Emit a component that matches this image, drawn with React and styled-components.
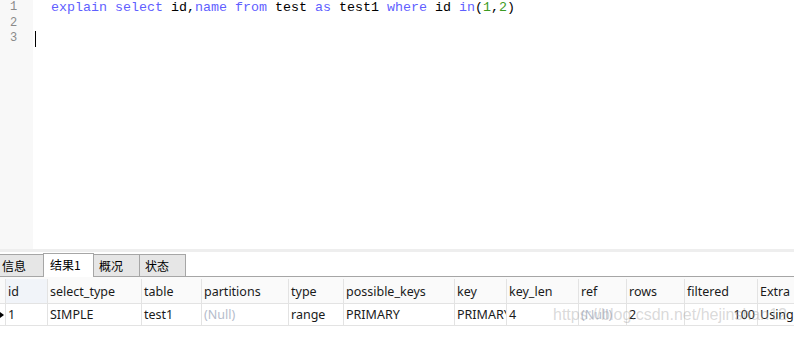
import styled, { createGlobalStyle } from "styled-components";

const GlobalStyle = createGlobalStyle`
  html, body {
    margin: 0;
    padding: 0;
    background: #ffffff;
  }
  body {
    font-family: "Noto Sans", "Noto Sans CJK SC", sans-serif;
  }
`;

// column widths taken from the grid of the result view
const COLUMNS = [
  { key: "id", label: "id", width: 42 },
  { key: "select_type", label: "select_type", width: 94 },
  { key: "table", label: "table", width: 60 },
  { key: "partitions", label: "partitions", width: 87 },
  { key: "type", label: "type", width: 55 },
  { key: "possible_keys", label: "possible_keys", width: 111 },
  { key: "key", label: "key", width: 52 },
  { key: "key_len", label: "key_len", width: 72 },
  { key: "ref", label: "ref", width: 48 },
  { key: "rows", label: "rows", width: 58 },
  { key: "filtered", label: "filtered", width: 73, align: "right" },
  { key: "Extra", label: "Extra", width: 60 },
];

const ROW = {
  id: "1",
  select_type: "SIMPLE",
  table: "test1",
  partitions: null,
  type: "range",
  possible_keys: "PRIMARY",
  key: "PRIMARY",
  key_len: "4",
  ref: null,
  rows: "2",
  filtered: "100",
  Extra: "Using where",
};

const TABS = ["信息", "结果1", "概况", "状态"];

const App = () => {
  return (
    <>
      <GlobalStyle />
      <Page>
        {/* SQL editor */}
        <Editor>
          <Gutter>
            <LineNo>1</LineNo>
            <LineNo>2</LineNo>
            <LineNo>3</LineNo>
          </Gutter>
          <Code>
            <Line>
              <Kw>explain</Kw> <Kw>select</Kw> id,<Kw>name</Kw> <Kw>from</Kw> test{" "}
              <Kw>as</Kw> test1 <Kw>where</Kw> id <Kw>in</Kw>(<Num>1</Num>,<Num>2</Num>)
            </Line>
            <Line />
            <Line>
              <Caret />
            </Line>
          </Code>
        </Editor>
        <Splitter />

        {/* Result tabs */}
        <TabBar>
          {TABS.map((t, i) => (
            <Tab key={t} active={i === 1}>
              {t}
            </Tab>
          ))}
        </TabBar>

        {/* Result grid */}
        <Grid>
          <Row header>
            <Indicator />
            {COLUMNS.map((c, i) => (
              <Cell key={c.key} width={c.width} first={i === 0} header>
                {c.label}
              </Cell>
            ))}
          </Row>
          <Row>
            <Indicator>
              <Arrow />
            </Indicator>
            {COLUMNS.map((c) => (
              <Cell key={c.key} width={c.width} align={c.align} muted={ROW[c.key] === null}>
                {ROW[c.key] === null ? "(Null)" : ROW[c.key]}
              </Cell>
            ))}
          </Row>
          <Watermark>https://blog.csdn.net/hejinshan12</Watermark>
        </Grid>
      </Page>
    </>
  );
};

const Page = styled.div`
  width: 794px;
  height: 340px;
  display: flex;
  flex-direction: column;
  overflow: hidden;
`;

const Editor = styled.div`
  height: 249px;
  display: flex;
  flex-shrink: 0;
`;

const Gutter = styled.div`
  width: 33px;
  background: #f8f8f8;
  display: flex;
  flex-direction: column;
`;

const LineNo = styled.div`
  height: 15.5px;
  line-height: 15.5px;
  padding-left: 10px;
  font-family: "Liberation Mono", monospace;
  font-size: 12px;
  color: #8a8a8a;
`;

const Code = styled.div`
  flex: 1;
  padding-left: 18px;
  display: flex;
  flex-direction: column;
`;

const Line = styled.div`
  height: 15.5px;
  line-height: 15.5px;
  font-family: "Liberation Mono", monospace;
  font-size: 13.33px;
  color: #000000;
  white-space: pre;
  position: relative;
`;

const Kw = styled.span`
  color: #5f5fff;
`;

const Num = styled.span`
  color: #3c9b22;
`;

const Caret = styled.span`
  position: absolute;
  left: -16px;
  top: 0;
  width: 1px;
  height: 16px;
  background: #000000;
`;

const Splitter = styled.div`
  height: 3px;
  background: #eeeeee;
  flex-shrink: 0;
`;

const TabBar = styled.div`
  height: 24px;
  display: flex;
  align-items: flex-end;
  border-bottom: 1px solid #a6a6a6;
  flex-shrink: 0;
`;

const Tab = styled.div`
  height: ${({ active }) => (active ? "24px" : "22px")};
  box-sizing: border-box;
  width: ${({ active }) => (active ? "51px" : "47px")};
  padding: 0 ${({ active }) => (active ? "6px" : "5px")};
  margin-right: -1px;
  border: 1px solid #a6a6a6;
  border-bottom: none;
  background: ${({ active }) => (active ? "#ffffff" : "#e6e6e6")};
  font-family: "Noto Sans CJK SC", sans-serif;
  font-size: 12px;
  line-height: 22px;
  color: #000000;
  margin-bottom: ${({ active }) => (active ? "-1px" : "0")};
  &:first-child {
    border-left: none;
    padding-left: 2px;
    width: 44px;
  }
`;

const Grid = styled.div`
  position: relative;
  display: flex;
  flex-direction: column;
`;

const Row = styled.div`
  display: flex;
  height: ${({ header }) => (header ? "24px" : "21px")};
  padding-top: ${({ header }) => (header ? "2px" : "0")};
  border-bottom: 1px solid #e3e3e3;
  background: ${({ header }) => (header ? "#fafafa" : "#ffffff")};
`;

const Indicator = styled.div`
  width: 6px;
  box-sizing: border-box;
  border-right: 1px solid #e3e3e3;
  display: flex;
  align-items: center;
  flex-shrink: 0;
`;

const Arrow = styled.span`
  width: 0;
  height: 0;
  border-top: 3px solid transparent;
  border-bottom: 3px solid transparent;
  border-left: 4px solid #000000;
`;

const Cell = styled.div`
  width: ${({ width }) => width}px;
  flex-shrink: 0;
  box-sizing: border-box;
  padding: 0 2px;
  border-right: 1px solid #e3e3e3;
  display: flex;
  align-items: center;
  justify-content: ${({ align }) => (align === "right" ? "flex-end" : "flex-start")};
  overflow: hidden;
  white-space: nowrap;
  font-family: "Noto Sans", "Noto Sans CJK SC", sans-serif;
  font-size: 12.5px;
  color: ${({ muted }) => (muted ? "#b5bccb" : "#1a1a1a")};
  background: ${({ first, header }) => (first && header ? "#f1f4f9" : "transparent")};
  &:last-child {
    border-right: none;
    width: auto;
    flex: 1;
  }
`;

const Watermark = styled.div`
  position: absolute;
  left: 553px;
  top: 29px;
  font-family: "Liberation Sans", sans-serif;
  font-size: 16px;
  color: rgba(160, 160, 160, 0.4);
  pointer-events: none;
  white-space: nowrap;
`;

export default App;
